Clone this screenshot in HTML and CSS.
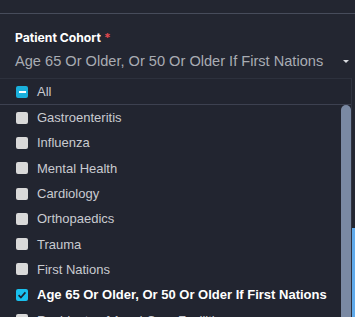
FILE: index.html
```html
<!DOCTYPE html>
<html>
<head>
<meta charset="utf-8">
<link rel="stylesheet" href="styles.css">
</head>
<body>
<div class="topbar"></div>
<div class="field">
  <div class="label">Patient Cohort <span class="req">*</span></div>
  <div class="select">
    <span class="value">Age 65 Or Older, Or 50 Or Older If First Nations</span>
    <span class="caret"></span>
  </div>
</div>
<div class="dropwrap">
  <div class="panel">
    <div class="row all"><span class="cb ind"><span class="dash"></span></span><span class="txt">All</span></div>
    <div class="listarea">
      <div class="list">
        <div class="row"><span class="cb"></span><span class="txt">Gastroenteritis</span></div>
        <div class="row"><span class="cb"></span><span class="txt">Influenza</span></div>
        <div class="row"><span class="cb"></span><span class="txt">Mental Health</span></div>
        <div class="row"><span class="cb"></span><span class="txt">Cardiology</span></div>
        <div class="row"><span class="cb"></span><span class="txt">Orthopaedics</span></div>
        <div class="row"><span class="cb"></span><span class="txt">Trauma</span></div>
        <div class="row"><span class="cb"></span><span class="txt">First Nations</span></div>
        <div class="row sel"><span class="cb on"><svg width="12" height="12" viewBox="0 0 12 12"><path d="M2.6 6.2 L4.9 8.5 L9.4 3.4" fill="none" stroke="#1d2230" stroke-width="1.7"/></svg></span><span class="txt">Age 65 Or Older, Or 50 Or Older If First Nations</span></div>
        <div class="row"><span class="cb"></span><span class="txt">Residents of Aged Care Facilities</span></div>
      </div>
      <div class="thumb"></div>
    </div>
  </div>
  <div class="side"><div class="blue"></div></div>
</div>
</body>
</html>
```
FILE: styles.css
```css
html, body { margin: 0; padding: 0; }
body {
  width: 355px;
  height: 317px;
  overflow: hidden;
  background: #232631;
  font-family: Inter, "Liberation Sans", sans-serif;
}
.topbar {
  height: 13px;
  border-bottom: 1px solid #474c5b;
}
.field {
  padding: 16px 0 0 15px;
  height: 64px;
  box-sizing: border-box;
}
.label {
  font-size: 12.2px;
  font-weight: 700;
  color: #ffffff;
  line-height: 16px;
}
.req { color: #e0484f; }
.select {
  display: flex;
  align-items: center;
  justify-content: space-between;
  margin-top: 5px;
  padding-right: 6px;
}
.value {
  font-family: "Liberation Sans", Arial, sans-serif;
  font-size: 14.6px;
  color: #a9acb3;
  line-height: 20px;
  white-space: nowrap;
}
.caret {
  width: 0; height: 0;
  border-left: 3.5px solid transparent;
  border-right: 3.5px solid transparent;
  border-top: 3.5px solid #d8dadf;
}
.dropwrap {
  display: flex;
  height: 239px;
}
.panel {
  width: 351px;
  border-top: 1px solid #2d313d;
  border-right: 1px solid #2f3340;
  background: #222530;
  display: flex;
  flex-direction: column;
}
.row {
  display: flex;
  align-items: center;
  height: 25.3px;
  padding-left: 16px;
  flex-shrink: 0;
}
.row.all {
  height: 25px;
  border-bottom: 1px solid #3d4150;
}
.cb {
  width: 12px;
  height: 12px;
  border-radius: 2px;
  background: #d9d9d9;
  margin-right: 9px;
  display: flex;
  align-items: center;
  justify-content: center;
  flex-shrink: 0;
}
.cb.ind { background: #1ab0dc; }
.dash { width: 7px; height: 2px; background: #ffffff; }
.cb.on { background: #19c0ee; }
.txt {
  font-family: "Liberation Sans", Arial, sans-serif;
  font-size: 13px;
  color: #c9cbd0;
  white-space: nowrap;
}
.sel .txt { color: #ffffff; font-weight: 700; }
.listarea {
  display: flex;
  flex: 1;
  overflow: hidden;
}
.list { flex: 1; overflow: hidden; }
.thumb {
  width: 10px;
  background: #7a89a3;
  border-radius: 5px 5px 0 0;
}
.side {
  width: 3px;
  display: flex;
  flex-direction: column;
}
.blue {
  margin-top: 150px;
  flex: 1;
  background: #5fa9ea;
}
```
